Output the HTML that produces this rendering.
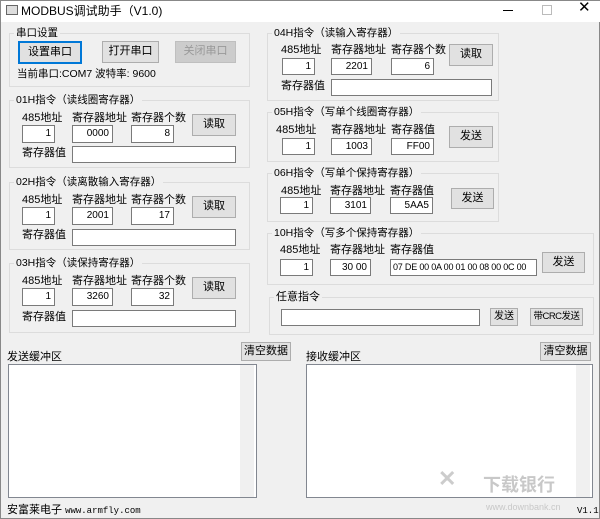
<!DOCTYPE html><html><head><meta charset="utf-8"><style>
*{box-sizing:border-box}
body{margin:0;width:600px;height:519px;overflow:hidden;background:#f0f0f0;font-family:"Liberation Sans","Noto Sans CJK SC",sans-serif;font-size:11px;color:#000;position:relative;border:1px solid #888}
div,span{position:absolute}
.t{white-space:nowrap;line-height:12px}
.g{border:1px solid #dcdcdc}
.gl{background:#f0f0f0;padding:0 2px;top:-7px;left:4px;white-space:nowrap;line-height:12px;font-size:10.5px}
.i{background:#fff;border:1px solid #7a7a7a;text-align:right;padding-right:3px;line-height:15px;font-size:10px;white-space:nowrap;overflow:hidden}
.b{background:#e1e1e1;border:1px solid #adadad;text-align:center;line-height:19px;white-space:nowrap;overflow:hidden}
.a{background:#fff;border:1px solid #828790}
</style></head><body>
<div style="left:0;top:0;width:600px;height:21px;background:#fff"></div>
<div style="left:5px;top:4px;width:12px;height:10px;border:1px solid #666;background:#ddd"></div>
<div class="t" style="left:20px;top:4px;font-size:12px">MODBUS调试助手（V1.0)</div>
<div style="left:502px;top:9px;width:10px;height:1px;background:#000"></div>
<div style="left:541px;top:4px;width:10px;height:10px;border:1px solid #bbb"></div>
<div class="t" style="left:577px;top:1px;font-size:15px">✕</div>

<div class="g" style="left:8px;top:32px;width:241px;height:54px"><span class="gl">串口设置</span></div>
<div class="b" style="left:17px;top:40px;width:64px;height:23px;border:2px solid #0078d7">设置串口</div>
<div class="b" style="left:101px;top:40px;width:57px;height:22px">打开串口</div>
<div class="b" style="left:174px;top:40px;width:61px;height:22px;color:#999;background:#ccc;border-color:#bfbfbf">关闭串口</div>
<div class="t" style="left:16px;top:67px;font-size:10.5px">当前串口:COM7 波特率: 9600</div>

<div class="g" style="left:8px;top:99px;width:241px;height:68px"><span class="gl">01H指令（读线圈寄存器）</span></div>
<div class="t" style="left:21px;top:111px">485地址</div><div class="t" style="left:71px;top:111px">寄存器地址</div><div class="t" style="left:130px;top:111px">寄存器个数</div>
<div class="i" style="left:21px;top:124px;width:33px;height:18px">1</div><div class="i" style="left:71px;top:124px;width:41px;height:18px">0000</div><div class="i" style="left:130px;top:124px;width:43px;height:18px">8</div>
<div class="b" style="left:191px;top:113px;width:44px;height:22px">读取</div>
<div class="t" style="left:21px;top:146px">寄存器值</div><div class="i" style="left:71px;top:145px;width:164px;height:17px"></div>

<div class="g" style="left:8px;top:181px;width:241px;height:68px"><span class="gl">02H指令（读离散输入寄存器）</span></div>
<div class="t" style="left:21px;top:193px">485地址</div><div class="t" style="left:71px;top:193px">寄存器地址</div><div class="t" style="left:130px;top:193px">寄存器个数</div>
<div class="i" style="left:21px;top:206px;width:33px;height:18px">1</div><div class="i" style="left:71px;top:206px;width:41px;height:18px">2001</div><div class="i" style="left:130px;top:206px;width:43px;height:18px">17</div>
<div class="b" style="left:191px;top:195px;width:44px;height:22px">读取</div>
<div class="t" style="left:21px;top:228px">寄存器值</div><div class="i" style="left:71px;top:228px;width:164px;height:17px"></div>

<div class="g" style="left:8px;top:262px;width:241px;height:70px"><span class="gl">03H指令（读保持寄存器）</span></div>
<div class="t" style="left:21px;top:274px">485地址</div><div class="t" style="left:71px;top:274px">寄存器地址</div><div class="t" style="left:130px;top:274px">寄存器个数</div>
<div class="i" style="left:21px;top:287px;width:33px;height:18px">1</div><div class="i" style="left:71px;top:287px;width:41px;height:18px">3260</div><div class="i" style="left:130px;top:287px;width:43px;height:18px">32</div>
<div class="b" style="left:191px;top:276px;width:44px;height:22px">读取</div>
<div class="t" style="left:21px;top:310px">寄存器值</div><div class="i" style="left:71px;top:309px;width:164px;height:17px"></div>

<div class="g" style="left:266px;top:32px;width:232px;height:68px"><span class="gl">04H指令（读输入寄存器）</span></div>
<div class="t" style="left:280px;top:43px">485地址</div><div class="t" style="left:330px;top:43px">寄存器地址</div><div class="t" style="left:390px;top:43px">寄存器个数</div>
<div class="i" style="left:281px;top:57px;width:33px;height:17px">1</div><div class="i" style="left:330px;top:57px;width:41px;height:17px">2201</div><div class="i" style="left:390px;top:57px;width:43px;height:17px">6</div>
<div class="b" style="left:448px;top:43px;width:44px;height:22px">读取</div>
<div class="t" style="left:280px;top:79px">寄存器值</div><div class="i" style="left:330px;top:78px;width:161px;height:17px"></div>

<div class="g" style="left:266px;top:111px;width:232px;height:50px"><span class="gl">05H指令（写单个线圈寄存器）</span></div>
<div class="t" style="left:275px;top:123px">485地址</div><div class="t" style="left:330px;top:123px">寄存器地址</div><div class="t" style="left:390px;top:123px">寄存器值</div>
<div class="i" style="left:281px;top:137px;width:33px;height:17px">1</div><div class="i" style="left:330px;top:137px;width:41px;height:17px">1003</div><div class="i" style="left:390px;top:137px;width:43px;height:17px">FF00</div>
<div class="b" style="left:448px;top:125px;width:44px;height:22px">发送</div>

<div class="g" style="left:266px;top:172px;width:232px;height:49px"><span class="gl">06H指令（写单个保持寄存器）</span></div>
<div class="t" style="left:280px;top:184px">485地址</div><div class="t" style="left:329px;top:184px">寄存器地址</div><div class="t" style="left:389px;top:184px">寄存器值</div>
<div class="i" style="left:279px;top:196px;width:33px;height:17px">1</div><div class="i" style="left:329px;top:196px;width:41px;height:17px">3101</div><div class="i" style="left:389px;top:196px;width:43px;height:17px">5AA5</div>
<div class="b" style="left:450px;top:187px;width:43px;height:21px">发送</div>

<div class="g" style="left:266px;top:232px;width:327px;height:52px"><span class="gl">10H指令（写多个保持寄存器）</span></div>
<div class="t" style="left:279px;top:243px">485地址</div><div class="t" style="left:329px;top:243px">寄存器地址</div><div class="t" style="left:389px;top:243px">寄存器值</div>
<div class="i" style="left:279px;top:258px;width:33px;height:17px">1</div><div class="i" style="left:329px;top:258px;width:41px;height:17px">30 00</div><div class="i" style="left:389px;top:258px;width:147px;height:17px;text-align:left;padding-left:2px;font-size:9px;letter-spacing:-0.2px">07 DE  00 0A  00 01  00 08  00 0C  00</div>
<div class="b" style="left:541px;top:251px;width:43px;height:21px">发送</div>

<div class="g" style="left:268px;top:296px;width:325px;height:38px"></div>
<div class="t" style="left:273px;top:290px;background:#f0f0f0;padding:0 2px">任意指令</div>
<div class="i" style="left:280px;top:308px;width:199px;height:17px"></div>
<div class="b" style="left:489px;top:307px;width:28px;height:18px;line-height:16px;font-size:10px">发送</div>
<div class="b" style="left:529px;top:307px;width:53px;height:18px;line-height:16px;font-size:9.5px;letter-spacing:-0.5px">带CRC发送</div>

<div class="t" style="left:6px;top:350px">发送缓冲区</div>
<div class="b" style="left:240px;top:341px;width:50px;height:19px;line-height:17px">清空数据</div>
<div class="a" style="left:7px;top:363px;width:249px;height:134px"><span style="right:2px;top:0;width:14px;height:132px;background:#f0f0f0"></span></div>
<div class="t" style="left:305px;top:350px">接收缓冲区</div>
<div class="b" style="left:539px;top:341px;width:51px;height:19px;line-height:17px">清空数据</div>
<div class="a" style="left:305px;top:363px;width:287px;height:134px"><span style="right:2px;top:0;width:14px;height:132px;background:#f0f0f0"></span></div>

<div class="t" style="left:437px;top:472px;font-size:22px;font-weight:bold;color:#ccc">✕</div>
<div class="t" style="left:482px;top:474px;font-size:18px;font-weight:bold;color:#c8c8c8;line-height:20px">下载银行</div>
<div class="t" style="left:485px;top:500px;font-size:9px;color:#c8c8c8">www.downbank.cn</div>

<div class="t" style="left:6px;top:503px">安富莱电子 <span style="position:static;font-family:'Liberation Mono',monospace;font-size:9px">www.armfly.com</span></div>
<div class="t" style="left:576px;top:504px;font-family:'Liberation Mono',monospace;font-size:9px">V1.1</div>
</body></html>
